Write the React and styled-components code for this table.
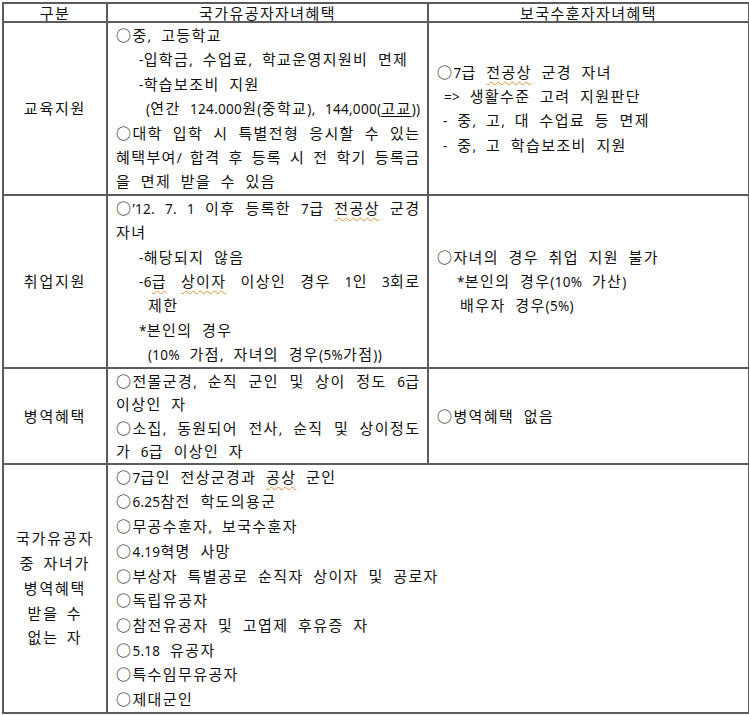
import React from "react";
import styled, { createGlobalStyle } from "styled-components";

const GlobalStyle = createGlobalStyle`
  html, body { margin: 0; padding: 0; background: #ffffff; }
  body { font-family: "Noto Sans CJK KR", "Noto Sans", sans-serif; color: #111111; }
`;

const Page = styled.div`
  padding: 2px 0 0 2px;
`;

const Table = styled.table`
  border-collapse: collapse;
  table-layout: fixed;
  width: 746px;
  font-size: 15px;
  letter-spacing: 1.4px;
  word-spacing: 4px;
  border: 2px solid #5c5c5c;
`;

const Row = styled.tr`
  height: ${(p) => p.$h}px;
  line-height: ${(p) => p.$lh}px;
`;

const HeadCell = styled.th`
  border: 2px solid #5c5c5c;
  font-weight: 400;
  text-align: center;
  padding: 0;
  line-height: 17px;
  word-spacing: 1px;
`;

const LabelCell = styled.td`
  border: 2px solid #5c5c5c;
  text-align: center;
  vertical-align: middle;
  padding: 0 2px;
  letter-spacing: 1.8px;
  word-spacing: 2px;
`;

const BodyCell = styled.td`
  border: 2px solid #5c5c5c;
  vertical-align: middle;
  padding: 0 8px 0 8px;
  white-space: nowrap;
`;

const LineBox = styled.div`
  padding-left: ${(p) => p.$indent || 0}px;
  text-align: ${(p) => (p.$justify ? "justify" : "left")};
  text-align-last: ${(p) => (p.$justify ? "justify" : "left")};
  white-space: ${(p) => (p.$justify ? "normal" : "nowrap")};
  margin-right: ${(p) => (p.$justify ? "-1.4px" : "0")};
  word-spacing: ${(p) => (p.$justify ? "1px" : "inherit")};
`;

/* digits and latin punctuation are narrower in the source font */
const Latin = styled.span`
  font-family: "Noto Sans", "Liberation Sans", sans-serif;
  font-size: 13.5px;
  letter-spacing: 0.3px;
  line-height: 1;
`;

/* keeps a bullet glued to its word so justification only widens spaces */
const Word = styled.span`
  display: inline-block;
`;

const Squiggle = styled.span`
  text-decoration: underline wavy #e0903a;
  text-decoration-thickness: 1px;
  text-underline-offset: 3px;
`;

const Under = styled.span`
  text-decoration: underline;
  text-underline-offset: 2px;
`;

const LATIN = /([0-9A-Za-z.,()%'’=>*\-\/]+)/;

function splitRuns(node, key = "r") {
  if (typeof node === "string") {
    return node
      .split(LATIN)
      .filter((s) => s !== "")
      .map((s, i) =>
        LATIN.test(s) ? <Latin key={`${key}-${i}`}>{s}</Latin> : s
      );
  }
  if (Array.isArray(node)) return node.map((n, i) => splitRuns(n, `${key}-${i}`));
  if (React.isValidElement(node)) {
    return React.cloneElement(
      node,
      { key },
      splitRuns(node.props.children, key + "c")
    );
  }
  return node;
}

function Line({ children, ...rest }) {
  return <LineBox {...rest}>{splitRuns(children)}</LineBox>;
}

export default function App() {
  return (
    <Page lang="ko">
      <GlobalStyle />
      <Table>
        <colgroup>
          <col style={{ width: 104 }} />
          <col style={{ width: 321 }} />
          <col style={{ width: 321 }} />
        </colgroup>
        <thead>
          <Row $h={17} $lh={17}>
            <HeadCell>구분</HeadCell>
            <HeadCell>국가유공자자녀혜택</HeadCell>
            <HeadCell>보국수훈자자녀혜택</HeadCell>
          </Row>
        </thead>
        <tbody>
          <Row $h={171} $lh={24.4}>
            <LabelCell>교육지원</LabelCell>
            <BodyCell>
              <Line>○중, 고등학교</Line>
              <Line $indent={23}>-입학금, 수업료, 학교운영지원비 면제</Line>
              <Line $indent={23}>-학습보조비 지원</Line>
              <Line $indent={30} $justify>
                <Word>(연간</Word> <Word>124.000원(중학교),</Word>{" "}
                <Word>
                  144,000(<Under>고교</Under>))
                </Word>
              </Line>
              <Line $justify>
                <Word>○대학</Word> 입학 시 특별전형 응시할 수 있는
              </Line>
              <Line $justify>혜택부여/ 합격 후 등록 시 전 학기 등록금</Line>
              <Line>을 면제 받을 수 있음</Line>
            </BodyCell>
            <BodyCell>
              <Line>
                ○7급 <Squiggle>전공상</Squiggle> 군경 자녀
              </Line>
              <Line $indent={7}>=&gt; 생활수준 고려 지원판단</Line>
              <Line $indent={6}>- 중, 고, 대 수업료 등 면제</Line>
              <Line $indent={6}>- 중, 고 학습보조비 지원</Line>
            </BodyCell>
          </Row>
          <Row $h={171} $lh={24.4}>
            <LabelCell>취업지원</LabelCell>
            <BodyCell>
              <Line $justify>
                <Word>○’12.</Word> <Word>7.</Word> 1 이후 등록한 7급{" "}
                <Squiggle>전공상</Squiggle> 군경
              </Line>
              <Line>자녀</Line>
              <Line $indent={23}>-해당되지 않음</Line>
              <Line $indent={23} $justify>
                <Word>
                  -6<Squiggle>급</Squiggle>
                </Word>{" "}
                <Squiggle>상이자</Squiggle> 이상인 경우 1인 3회로
              </Line>
              <Line $indent={32}>제한</Line>
              <Line $indent={23}>*본인의 경우</Line>
              <Line $indent={32}>(10% 가점, 자녀의 경우(5%가점))</Line>
            </BodyCell>
            <BodyCell>
              <Line>○자녀의 경우 취업 지원 불가</Line>
              <Line $indent={20}>*본인의 경우(10% 가산)</Line>
              <Line $indent={23}>배우자 경우(5%)</Line>
            </BodyCell>
          </Row>
          <Row $h={94} $lh={23.5}>
            <LabelCell>병역혜택</LabelCell>
            <BodyCell>
              <Line $justify>
                <Word>○전몰군경,</Word> 순직 군인 및 상이 정도 6급
              </Line>
              <Line>이상인 자</Line>
              <Line $justify>
                <Word>○소집,</Word> 동원되어 전사, 순직 및 상이정도
              </Line>
              <Line>가 6급 이상인 자</Line>
            </BodyCell>
            <BodyCell>
              <Line>○병역혜택 없음</Line>
            </BodyCell>
          </Row>
          <Row $h={247} $lh={24.7}>
            <LabelCell>
              국가유공자
              <br />중 자녀가
              <br />병역혜택
              <br />받을 수
              <br />없는 자
            </LabelCell>
            <BodyCell colSpan={2}>
              <Line>
                ○7급인 전상군경과 <Squiggle>공상</Squiggle> 군인
              </Line>
              <Line>○6.25참전 학도의용군</Line>
              <Line>○무공수훈자, 보국수훈자</Line>
              <Line>○4.19혁명 사망</Line>
              <Line>○부상자 특별공로 순직자 상이자 및 공로자</Line>
              <Line>○독립유공자</Line>
              <Line>○참전유공자 및 고엽제 후유증 자</Line>
              <Line>○5.18 유공자</Line>
              <Line>○특수임무유공자</Line>
              <Line>○제대군인</Line>
            </BodyCell>
          </Row>
        </tbody>
      </Table>
    </Page>
  );
}
